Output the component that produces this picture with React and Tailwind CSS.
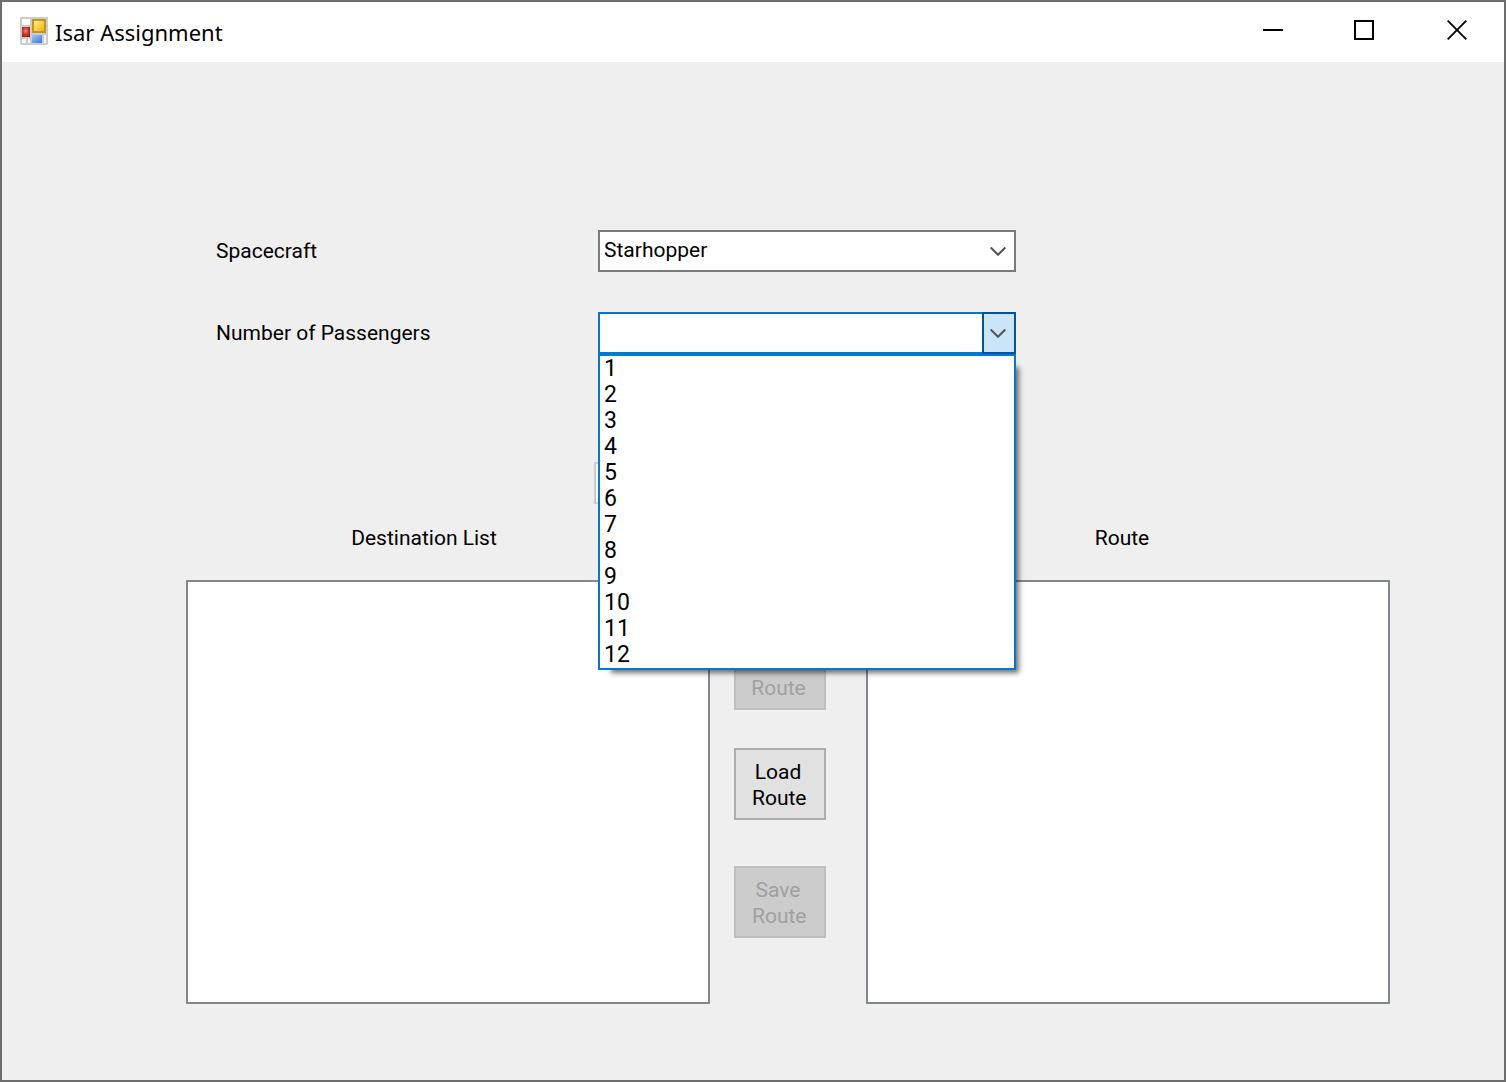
import { useState } from "react";

const passengerOptions = ["1", "2", "3", "4", "5", "6", "7", "8", "9", "10", "11", "12"];

function AppIcon() {
  return (
    <svg width="28" height="28" viewBox="0 0 28 28" aria-hidden="true">
      <defs>
        <linearGradient id="gold" x1="0" y1="0" x2="1" y2="1">
          <stop offset="0" stopColor="#fff3b0" />
          <stop offset="0.45" stopColor="#fbd34a" />
          <stop offset="1" stopColor="#eeb010" />
        </linearGradient>
        <linearGradient id="blue" x1="0" y1="0" x2="1" y2="1">
          <stop offset="0" stopColor="#a3c6fb" />
          <stop offset="1" stopColor="#3a76e0" />
        </linearGradient>
        <radialGradient id="red" cx="0.45" cy="0.4" r="0.7">
          <stop offset="0" stopColor="#ee8a80" />
          <stop offset="0.5" stopColor="#c9382c" />
          <stop offset="1" stopColor="#8e1a12" />
        </radialGradient>
      </defs>
      <rect width="28" height="28" rx="1" fill="#cdcdcd" />
      <rect x="2" y="2" width="8" height="6" fill="#fff" />
      <rect x="2" y="22" width="4" height="4" fill="#f6f6f6" />
      <rect x="8" y="22" width="2" height="4" fill="#f6f6f6" />
      <rect x="24" y="18" width="2" height="8" fill="#f6f6f6" />
      <rect x="13" y="3" width="12" height="12" fill="url(#gold)" stroke="#c2961c" strokeWidth="2" />
      <rect x="2" y="10" width="8" height="10" fill="url(#red)" />
      <rect x="12" y="18" width="10" height="8" fill="url(#blue)" />
    </svg>
  );
}

function Chevron() {
  return (
    <svg width="16" height="10" viewBox="0 0 16 10" fill="none" stroke="#555" strokeWidth="2" aria-hidden="true">
      <path d="M.7 1.5 8 8.8 15.3 1.5" />
    </svg>
  );
}

function TitleBar() {
  return (
    <header className="flex h-[60px] shrink-0 items-center bg-white pl-[18px] font-['Noto_Sans','Open_Sans',sans-serif]">
      <div className="pb-0.5">
        <AppIcon />
      </div>
      <h1 className="grow pl-[7px] text-[22px] leading-8">Isar Assignment</h1>
      <div className="flex h-full pb-1">
        <button type="button" aria-label="Minimize" className="flex w-[90px] items-center justify-center">
          <svg width="20" height="20" viewBox="0 0 20 20" stroke="#000" strokeWidth="2" aria-hidden="true">
            <path d="M0 10h20" />
          </svg>
        </button>
        <button type="button" aria-label="Maximize" className="flex w-[92px] items-center justify-center">
          <svg width="20" height="20" viewBox="0 0 20 20" fill="none" stroke="#000" strokeWidth="2" aria-hidden="true">
            <path d="M1 1h18v18H1z" />
          </svg>
        </button>
        <button type="button" aria-label="Close" className="flex w-[94px] items-center justify-center">
          <svg width="20" height="20" viewBox="0 0 20 20" stroke="#000" strokeWidth="1.8" aria-hidden="true">
            <path d="M.7.7l18.6 18.6M19.3.7.7 19.3" />
          </svg>
        </button>
      </div>
    </header>
  );
}

function ListPanel({ id }) {
  return (
    <ul
      role="listbox"
      aria-labelledby={id}
      tabIndex={0}
      className="flex-1 border-2 border-[#828790] bg-white outline-none"
    />
  );
}

export default function App() {
  const [craft, setCraft] = useState("Starhopper");
  const [passengers, setPassengers] = useState("");
  const [open, setOpen] = useState(true);

  return (
    <div className="flex min-h-screen flex-col border-2 border-[#6d6d6d] bg-[#efefef] font-['Roboto','Liberation_Sans',sans-serif] text-[21px] leading-[26px] text-black">
      <TitleBar />
      <main className="flex grow flex-col pt-[168px] pr-[114px] pb-[76px] pl-[184px]">
        <form className="grid grid-cols-[412fr_418fr_374fr] gap-y-10">
          <label htmlFor="craft" className="self-center pl-[30px]">Spacecraft</label>
          <div className="relative h-[42px]">
            <select
              id="craft"
              value={craft}
              onChange={(e) => setCraft(e.target.value)}
              className="h-full w-full appearance-none border-2 border-[#7a7a7a] bg-white pb-0.5 pl-1 outline-none"
            >
              <option>Starhopper</option>
            </select>
            <span className="pointer-events-none absolute inset-y-0 right-[10px] flex items-center">
              <Chevron />
            </span>
          </div>
          <label htmlFor="passengers" className="col-start-1 self-center pl-[30px]">Number of Passengers</label>
          <div className="relative flex h-[42px]">
            <input
              id="passengers"
              role="combobox"
              aria-expanded={open}
              aria-controls="passenger-list"
              value={passengers}
              onChange={(e) => setPassengers(e.target.value)}
              className="min-w-0 grow border-2 border-r-0 border-[#0078d7] bg-white pl-1 outline-none"
            />
            <button
              type="button"
              aria-label="Show passenger counts"
              onClick={() => setOpen(!open)}
              className="flex w-[34px] items-center justify-center border-2 border-[#005499] bg-[#cce4f7] pr-0.5"
            >
              <Chevron />
            </button>
            {open && (
              <ul
                id="passenger-list"
                role="listbox"
                aria-label="Number of passengers"
                className="absolute top-full left-0 z-10 w-full border-2 border-[#0078d7] bg-white text-[23px] leading-[26px] shadow-[8px_8px_5px_-5px_rgba(0,0,0,0.55)]"
              >
                {passengerOptions.map((n) => (
                  <li
                    key={n}
                    role="option"
                    aria-selected={n === passengers}
                    onClick={() => {
                      setPassengers(n);
                      setOpen(false);
                    }}
                    className="h-[26px] pl-1"
                  >
                    {n}
                  </li>
                ))}
              </ul>
            )}
          </div>
          <div className="col-start-2 mt-[68px] -ml-1 h-[42px]">
            <input
              disabled
              aria-label="Summary"
              className="h-full w-full border-2 border-[#cccccc] bg-[#f9f9f9]"
            />
          </div>
        </form>

        <div className="grid grid-cols-[1fr_156px_1fr] pt-[21px] pb-[29px]">
          <h2 id="destinations" className="pr-12 text-center">Destination List</h2>
          <h2 id="route" className="col-start-3 pr-3 text-center">Route</h2>
        </div>

        <div className="flex grow">
          <ListPanel id="destinations" />
          <div className="flex w-[156px] flex-col pt-[58px] pl-6">
            <button type="button" disabled className="flex h-[72px] w-[92px] items-end justify-center border-2 border-[#bfbfbf] bg-[#cccccc] pr-[3px] pb-[7px] text-[#a0a0a0]">
              Route
            </button>
            <button type="button" className="mt-[38px] h-[72px] w-[92px] border-2 border-[#adadad] bg-[#e1e1e1] pt-px pr-5 pl-4">
              Load Route
            </button>
            <button type="button" disabled className="mt-[46px] h-[72px] w-[92px] border-2 border-[#bfbfbf] bg-[#cccccc] pt-px pr-5 pl-4 text-[#a0a0a0]">
              Save Route
            </button>
          </div>
          <ListPanel id="route" />
        </div>
      </main>
    </div>
  );
}
